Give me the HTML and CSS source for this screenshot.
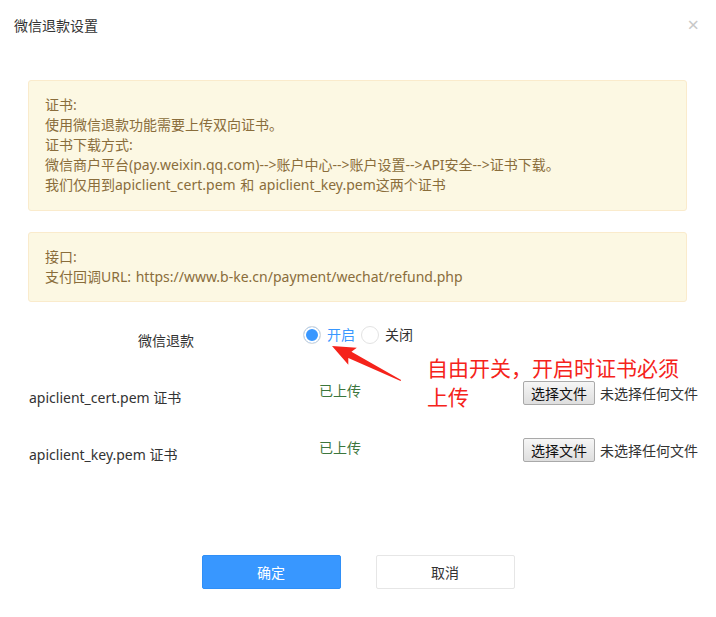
FILE: index.html
```html
<!DOCTYPE html>
<html lang="zh-CN">

<head>
    <meta charset="UTF-8">
    <meta name="viewport" content="width=device-width, initial-scale=1.0">
    <title>微信退款设置</title>
    <link rel="stylesheet" href="styles.css">
</head>

<body>
    <div class="dialog">
        <!-- Header -->
        <div class="dialog-header">
            <h3>微信退款设置</h3>
            <span class="close">&times;</span>
        </div>

        <!-- Body -->
        <div class="dialog-body">
            <div class="notice">
                <p>证书:</p>
                <p>使用微信退款功能需要上传双向证书。</p>
                <p>证书下载方式:</p>
                <p>微信商户平台(pay.weixin.qq.com)--&gt;账户中心--&gt;账户设置--&gt;API安全--&gt;证书下载。</p>
                <p>我们仅用到apiclient_cert.pem 和 apiclient_key.pem这两个证书</p>
            </div>

            <div class="notice">
                <p>接口:</p>
                <p>支付回调URL: https://www.b-ke.cn/payment/wechat/refund.php</p>
            </div>

            <form class="settings">
                <div class="row row-switch">
                    <label class="row-label center">微信退款</label>
                    <div class="radios">
                        <label class="radio checked"><input type="radio" name="refund" checked><span>开启</span></label>
                        <label class="radio"><input type="radio" name="refund"><span>关闭</span></label>
                    </div>
                </div>

                <div class="row">
                    <label class="row-label">apiclient_cert.pem 证书</label>
                    <span class="status">已上传</span>
                    <div class="file">
                        <button type="button" class="file-btn">选择文件</button>
                        <span class="file-name">未选择任何文件</span>
                    </div>
                </div>

                <div class="row">
                    <label class="row-label">apiclient_key.pem 证书</label>
                    <span class="status">已上传</span>
                    <div class="file">
                        <button type="button" class="file-btn">选择文件</button>
                        <span class="file-name">未选择任何文件</span>
                    </div>
                </div>
            </form>
        </div>

        <!-- Footer -->
        <div class="dialog-footer">
            <button type="button" class="btn btn-primary">确定</button>
            <button type="button" class="btn btn-default">取消</button>
        </div>

        <!-- Annotation -->
        <svg class="arrow" width="716" height="617" viewBox="0 0 716 617">
            <polygon transform="translate(332 346) rotate(26.6)"
                points="0,0 23,-9.5 20,-3.5 77,-0.6 77,0.6 20,3.5 23,9.5" fill="#f5231b" />
        </svg>
        <div class="note">自由开关，开启时证书必须<br>上传</div>
    </div>
</body>

</html>
```

FILE: styles.css
```css
:root {
    --warn-bg: #fcf8e3;
    --warn-border: #faebcc;
    --warn-text: #8a6d3b;
    --blue: #3897ff;
    --green: #3c763d;
    --red: #f5231b;
}

* {
    margin: 0;
    padding: 0;
    box-sizing: border-box;
}

body {
    background: #fff;
    font-family: "Noto Sans", "Noto Sans CJK SC", sans-serif;
    font-size: 14px;
    color: #333;
}

.dialog {
    position: relative;
    width: 716px;
    height: 617px;
}

/* Header */
.dialog-header {
    display: flex;
    justify-content: space-between;
    align-items: center;
    height: 49px;
    padding: 0 17px 0 14px;
}

.dialog-header h3 {
    font-size: 14px;
    font-weight: normal;
    color: #333;
}

.close {
    font-size: 20px;
    color: #c8c8c8;
    line-height: 1;
}

/* Body */
.dialog-body {
    padding: 31px 29px 0 28px;
}

.notice {
    background: var(--warn-bg);
    border: 1px solid var(--warn-border);
    border-radius: 3px;
    color: var(--warn-text);
    padding: 14px 16px 15px;
    line-height: 20px;
    margin-bottom: 21px;
    word-spacing: 1px;
}

.notice + .notice {
    padding-bottom: 14px;
}

.settings {
    margin-top: 2px;
}

.row {
    display: flex;
    align-items: flex-start;
    height: 57px;
    padding-left: 1px;
}

.row-switch {
    height: 58px;
}

.row-label {
    flex-shrink: 0;
    width: 274px;
    line-height: 20px;
    color: #333;
    padding-top: 7px;
    white-space: nowrap;
}

.row-label.center {
    text-align: center;
    padding-top: 8px;
}

.status {
    flex-shrink: 0;
    width: 220px;
    padding-left: 16px;
    line-height: 20px;
    color: var(--green);
}

/* Radios */
.radios {
    display: flex;
    gap: 2px;
    margin-top: 2px;
}

.radio {
    display: flex;
    align-items: center;
    gap: 6px;
    padding-right: 4px;
    line-height: 20px;
    color: #333;
}

.radio.checked {
    color: var(--blue);
}

.radio input {
    appearance: none;
    width: 18px;
    height: 18px;
    border-radius: 50%;
    border: 1px solid #e3e3e3;
    background: #fff;
}

.radio input:checked {
    background: var(--blue);
    box-shadow: inset 0 0 0 2px #fff;
    border-color: #dcdcdc;
}

/* File input */
.file {
    flex-shrink: 0;
    display: flex;
    align-items: center;
    gap: 5px;
    white-space: nowrap;
}

.file-btn {
    height: 24px;
    width: 72px;
    font: inherit;
    color: #111;
    border: 1px solid #a9a9a9;
    border-radius: 2px;
    background: linear-gradient(#f6f6f6, #dedede);
}

.file-name {
    color: #333;
}

/* Footer */
.dialog-footer {
    display: flex;
    justify-content: center;
    gap: 35px;
    margin-top: 60px;
}

.btn {
    width: 139px;
    height: 34px;
    font: inherit;
    border-radius: 2px;
}

.btn-primary {
    background: var(--blue);
    border: 1px solid #2f8ff7;
    color: #fff;
}

.btn-default {
    background: #fff;
    border: 1px solid #e6e6e6;
    color: #333;
}

/* Annotation */
.arrow {
    position: absolute;
    top: 0;
    left: 0;
    pointer-events: none;
}

.note {
    position: absolute;
    left: 427px;
    top: 354px;
    font-size: 21px;
    line-height: 29px;
    color: var(--red);
}
```
